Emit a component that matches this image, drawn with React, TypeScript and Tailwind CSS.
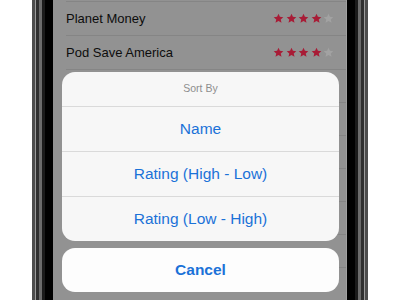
import React from "react";

// ─── Data ───────────────────────────────────────────────────

const podcasts = [
  { name: "Planet Money", rating: 4 },
  { name: "Pod Save America", rating: 4 },
];

// rows hidden behind the sheet: only their separators peek out at the edge
const hiddenRows = 7;

const sortOptions = ["Name", "Rating (High - Low)", "Rating (Low - High)"];

// ─── Star ───────────────────────────────────────────────────

function Star({ filled }: { filled: boolean }) {
  return (
    <svg viewBox="0 0 24 24" className="size-[11px]" aria-hidden="true">
      <path
        d="M12 1.5l3.1 6.9 7.4.7-5.6 5 1.7 7.4L12 17.6l-6.6 3.9 1.7-7.4-5.6-5 7.4-.7z"
        fill={filled ? "#a81c36" : "#a2a2a2"}
      />
    </svg>
  );
}

// ─── Row (dimmed behind the sheet) ──────────────────────────

function PodcastRow({ name, rating }: { name: string; rating: number }) {
  return (
    <div className="ml-[13px] flex h-[34px] items-center justify-between border-b border-[#858585] pr-[12px]">
      <span className="text-[13px] text-[#0d0d0d]">{name}</span>
      <div className="flex items-center gap-[1.5px]">
        {[0, 1, 2, 3, 4].map((i) => (
          <Star key={i} filled={i < rating} />
        ))}
      </div>
    </div>
  );
}

// ─── Action sheet ───────────────────────────────────────────

function ActionSheet() {
  return (
    <div className="absolute bottom-[8px] left-[9px] right-[8px] flex flex-col gap-[7px]">
      <div className="overflow-hidden rounded-[13px] bg-[#f7f7f7]">
        <div className="flex h-[35px] items-center justify-center border-b border-[#dadada] text-[10.5px] text-[#8e8e8e]">
          Sort By
        </div>
        {sortOptions.map((opt, i) => (
          <div
            key={opt}
            className={
              i < sortOptions.length - 1
                ? "flex h-[45px] items-center justify-center border-b border-[#dadada] text-[15.5px] text-[#1b72d8]"
                : "flex h-[44px] items-center justify-center text-[15.5px] text-[#1b72d8]"
            }
          >
            {opt}
          </div>
        ))}
      </div>
      <div className="flex h-[44px] items-center justify-center rounded-[13px] bg-[#fdfdfd] text-[15.5px] font-bold text-[#1b72d8]">
        Cancel
      </div>
    </div>
  );
}

// ─── Main ───────────────────────────────────────────────────

export default function App() {
  return (
    <div
      className="flex h-[300px] w-[400px] overflow-hidden bg-white"
      style={{ fontFamily: '"Liberation Sans", Arial, sans-serif' }}
    >
      {/* phone frame layers */}
      <div className="ml-[32px] flex h-full w-[336px] bg-[#4d4d4d] px-[3px]">
        <div className="flex flex-1 bg-[#9c9c9c] px-[1px]">
          <div className="flex flex-1 bg-[#2f2f2f] px-[3px]">
            <div className="flex flex-1 bg-[#6b6b6b] px-[3px]">
              <div className="flex flex-1 bg-[#1a1a1a] px-[3px]">
                <div className="flex flex-1 bg-black px-[8px]">
                  {/* screen */}
                  <div className="relative flex-1 overflow-hidden bg-[#929292]">
                    <div className="border-r border-[#a0a0a0] pt-[1px]">
                      <div className="ml-[13px] border-b border-[#858585]" />
                      {podcasts.map((p) => (
                        <PodcastRow key={p.name} name={p.name} rating={p.rating} />
                      ))}
                      {Array.from({ length: hiddenRows }).map((_, i) => (
                        <div
                          key={i}
                          className="ml-[13px] h-[33px] border-b border-[#858585]"
                        />
                      ))}
                    </div>
                    <ActionSheet />
                  </div>
                </div>
              </div>
            </div>
          </div>
        </div>
      </div>
    </div>
  );
}
